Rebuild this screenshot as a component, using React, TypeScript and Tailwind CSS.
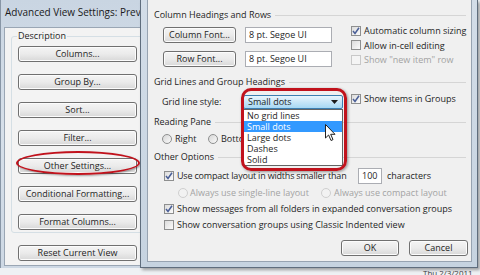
import React from "react"

const font = { fontFamily: '"Open Sans", "Liberation Sans", sans-serif' }

function Btn({ label, className = "" }: { label: string; className?: string }) {
  return (
    <div
      className={
        "flex items-center justify-center h-[16px] rounded-[3px] border border-[#707070] bg-linear-to-b from-[#f4f4f4] via-[#ebebeb] to-[#d8d8d8] text-[9px] text-[#1e1e1e] whitespace-nowrap shadow-[inset_0_0_0_1px_#fcfcfc] " +
        className
      }
    >
      {label}
    </div>
  )
}

function Check({ checked, disabled }: { checked?: boolean; disabled?: boolean }) {
  return (
    <div
      className={
        "w-[10px] h-[10px] shrink-0 border flex items-center justify-center " +
        (disabled ? "border-[#c8c8c8] bg-[#f4f4f4]" : "border-[#8e8f8f] bg-linear-to-br from-[#dcdcdc] to-[#fbfbfb]")
      }
    >
      {checked && (
        <svg width="8" height="8" viewBox="0 0 8 8">
          <path d="M1 4 L3 6.5 L7 0.8" fill="none" stroke="#4a5f97" strokeWidth="1.5" />
        </svg>
      )}
    </div>
  )
}

function Radio({ disabled }: { disabled?: boolean }) {
  return (
    <div
      className={
        "w-[10px] h-[10px] shrink-0 rounded-full border " +
        (disabled ? "border-[#cfcfcf] bg-[#f2f2f2]" : "border-[#8e8f8f] bg-linear-to-br from-[#d6d6d6] to-[#fafafa]")
      }
    />
  )
}

function Header({ label, className = "" }: { label: string; className?: string }) {
  return (
    <div className={"flex items-center h-[12px] pl-[6px] pr-[5px] gap-[4px] " + className}>
      <span className="whitespace-nowrap">{label}</span>
      <div className="flex-1 border-t border-[#d5d5d5]" />
    </div>
  )
}

function Field({ value, className = "" }: { value: string; className?: string }) {
  return (
    <div
      className={
        "h-[16px] bg-white border border-[#abadb3] flex items-center pl-[3px] whitespace-nowrap " + className
      }
    >
      {value}
    </div>
  )
}

function BackWindow() {
  const buttons = ["Columns...", "Group By...", "Sort...", "Filter...", "Other Settings...", "Conditional Formatting...", "Format Columns..."]
  return (
    <div className="relative w-[141px] h-[268px] overflow-hidden bg-linear-to-b from-[#c9d5e2] via-[#d7e0ea] to-[#cdd8e4] border-l border-[#8896a6]">
      {/* TITLE */}
      <div className="h-[27px] pl-[4px] pt-[5px] text-[10px] text-[#1a1a1a] whitespace-nowrap">
        Advanced View Settings: Preview
      </div>
      {/* BODY */}
      <div className="ml-[3px] h-[239px] bg-[#f3f3f3] border border-r-0 border-[#9aa6b4]">
        <div className="relative mt-[8px] ml-[6px] w-[160px] h-[197px] border border-[#d5dfe5] rounded-[3px] pt-[9px] pl-[6px]">
          <span className="absolute -top-[8px] left-[5px] px-[1px] bg-[#f3f3f3] text-[9px] text-[#1e1e1e]">Description</span>
          <div className="flex flex-col gap-[12px]">
            {buttons.map((b) => (
              <Btn key={b} label={b} className="w-[119px]" />
            ))}
          </div>
        </div>
        <Btn label="Reset Current View" className="w-[119px] mt-[12px] ml-[13px]" />
      </div>
      {/* RED ELLIPSE */}
      <div className="absolute left-[15px] top-[151px] w-[124px] h-[24px] rounded-[50%] border-2 border-[#c1121c] shadow-[1px_1px_2px_rgba(0,0,0,0.35)]" />
    </div>
  )
}

function FrontWindow() {
  const items = ["No grid lines", "Small dots", "Large dots", "Dashes", "Solid"]
  return (
    <div className="absolute left-[140px] top-0 w-[338px] h-[268px] bg-linear-to-b from-[#d3dde8] to-[#c6d3e0] border border-t-0 border-[#5f6d7d] pl-[6px] pr-[5px] pb-[5px] shadow-[2px_2px_3px_rgba(0,0,0,0.35)]">
      <div className="relative h-full pt-[9px] bg-[#f0f0f0] border border-t-0 border-[#97a3b1] text-[9px] text-[#1e1e1e] whitespace-nowrap">
        <Header label="Column Headings and Rows" />
        {/* FONT ROWS + CHECKBOXES */}
        <div className="flex h-[40px] mt-[6px]">
          <div className="pl-[15px] flex flex-col gap-[8px]">
            <div className="flex">
              <Btn label="Column Font..." className="w-[73px]" />
              <Field value="8 pt. Segoe UI" className="w-[87px] ml-[9px]" />
            </div>
            <div className="flex">
              <Btn label="Row Font..." className="w-[73px]" />
              <Field value="8 pt. Segoe UI" className="w-[87px] ml-[9px]" />
            </div>
          </div>
          <div className="ml-[19px] -mt-[3px] flex flex-col">
            <div className="h-[16px] flex items-center gap-[3px]">
              <Check checked />
              <span>Automatic column sizing</span>
            </div>
            <div className="h-[16px] flex items-center gap-[3px]">
              <Check />
              <span>Allow in-cell editing</span>
            </div>
            <div className="h-[16px] flex items-center gap-[3px] text-[#a3a3a3]">
              <Check disabled />
              <span>Show "new item" row</span>
            </div>
          </div>
        </div>

        <Header label="Grid Lines and Group Headings" className="mt-[9px]" />
        <div className="flex items-center h-[14px] mt-[7px]">
          <span className="pl-[14px] w-[95px]">Grid line style:</span>
          <div className="w-[100px] h-[14px] rounded-[2px] border border-[#3c7fb1] bg-linear-to-b from-[#eaf6fd] via-[#c7e6f8] to-[#a6d8f4] flex items-center pl-[4px] pr-[4px] justify-between">
            <span>Small dots</span>
            <svg width="7" height="4" viewBox="0 0 7 4">
              <path d="M0 0 H7 L3.5 4 Z" fill="#1a1a1a" />
            </svg>
          </div>
          <div className="ml-[8px] -mt-[6px] flex items-center gap-[3px]">
            <Check checked />
            <span>Show items in Groups</span>
          </div>
        </div>

        <Header label="Reading Pane" className="mt-[7px]" />
        <div className="flex items-center h-[12px] mt-[5px] pl-[14px]">
          <Radio />
          <span className="ml-[3px] w-[33px]">Right</span>
          <Radio />
          <span className="ml-[3px]">Bottom</span>
        </div>

        <Header label="Other Options" className="mt-[6px]" />
        <div className="flex items-center h-[16px] mt-[5px] pl-[16px]">
          <Check checked />
          <span className="ml-[3px] w-[181px] tracking-[-0.2px]">Use compact layout in widths smaller than</span>
          <Field value="100" className="w-[24px]" />
          <span className="ml-[5px]">characters</span>
        </div>
        <div className="flex items-center h-[12px] mt-[3px] pl-[30px] text-[#a3a3a3]">
          <Radio disabled />
          <span className="ml-[2px] w-[131px]">Always use single-line layout</span>
          <Radio disabled />
          <span className="ml-[3px]">Always use compact layout</span>
        </div>
        <div className="flex items-center h-[12px] mt-[4px] pl-[16px] gap-[3px]">
          <Check checked />
          <span>Show messages from all folders in expanded conversation groups</span>
        </div>
        <div className="flex items-center h-[12px] mt-[4px] pl-[16px] gap-[3px]">
          <Check />
          <span>Show conversation groups using Classic Indented view</span>
        </div>
        <div className="flex mt-[9px] pl-[193px] gap-[10px]">
          <Btn label="OK" className="w-[58px] border-[#3c7fb1] shadow-[inset_0_0_0_1px_#48d5fd]" />
          <Btn label="Cancel" className="w-[59px]" />
        </div>

        {/* DROPDOWN LIST */}
        <div className="absolute left-[95px] top-[109px] w-[100px] h-[57px] bg-white border border-[#646464]">
          {items.map((it, i) => (
            <div
              key={it}
              className={"h-[11px] leading-[11px] pl-[3px] " + (i === 1 ? "bg-[#3399ff] text-white" : "")}
            >
              {it}
            </div>
          ))}
        </div>
        {/* RED HIGHLIGHT */}
        <div className="absolute left-[93px] top-[88px] w-[106px] h-[83px] rounded-[10px] border-[3px] border-[#c1121c] shadow-[1px_1px_3px_rgba(0,0,0,0.4)]" />
        {/* CURSOR */}
        <svg className="absolute left-[177px] top-[124px]" width="12" height="18" viewBox="0 0 12 18">
          <path d="M0.5 0.5 V14 L3.6 11 L6 16.5 L8 15.6 L5.7 10.3 H10 Z" fill="white" stroke="#222" strokeWidth="1" />
        </svg>
      </div>
    </div>
  )
}

export default function App() {
  return (
    <div className="relative w-[480px] h-[275px] overflow-hidden bg-[#eef1f4]" style={font}>
      <BackWindow />
      <FrontWindow />
      {/* DESKTOP CLOCK */}
      <span className="absolute left-[423px] top-[267px] text-[8px] text-[#3a3a3a] whitespace-nowrap">Thu 2/3/2011</span>
    </div>
  )
}
